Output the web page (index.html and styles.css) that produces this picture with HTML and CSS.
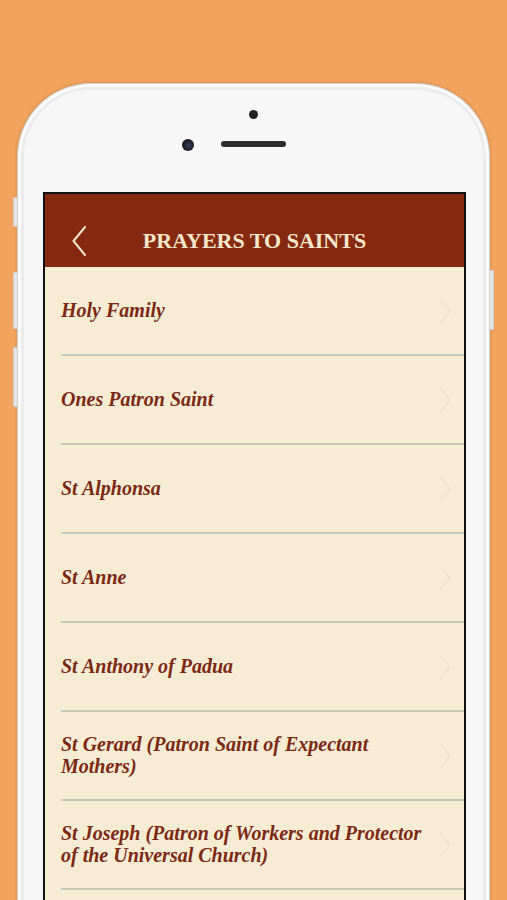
FILE: index.html
```html
<!DOCTYPE html>
<html lang="en">
<head>
<meta charset="utf-8">
<title>Prayers to Saints</title>
<link rel="stylesheet" href="styles.css">
</head>
<body>
<div class="phone">
  <span class="btn btn-l1"></span>
  <span class="btn btn-l2"></span>
  <span class="btn btn-l3"></span>
  <span class="btn btn-r1"></span>
  <div class="phone-top">
    <span class="sensor"></span>
    <div class="sensor-row">
      <span class="camera"></span>
      <span class="speaker"></span>
      <span class="spacer"></span>
    </div>
  </div>
  <div class="screen">
    <header class="navbar">
      <div class="back">
        <svg width="14" height="30" viewBox="0 0 14 30"><path d="M13 1 L1.5 15 L13 29" fill="none" stroke="#F5E6CC" stroke-width="2" stroke-linecap="round" stroke-linejoin="round"/></svg>
      </div>
      <h1 class="title">PRAYERS TO SAINTS</h1>
      <div></div>
    </header>
    <ul class="list">
      <li class="row"><div class="row-inner"><span class="label">Holy Family</span><svg class="chev" width="12" height="26" viewBox="0 0 12 26"><path d="M1 1 L11 13 L1 25" fill="none" stroke="#ECE2CB" stroke-width="1.5"/></svg></div></li>
      <li class="row"><div class="row-inner"><span class="label">Ones Patron Saint</span><svg class="chev" width="12" height="26" viewBox="0 0 12 26"><path d="M1 1 L11 13 L1 25" fill="none" stroke="#ECE2CB" stroke-width="1.5"/></svg></div></li>
      <li class="row"><div class="row-inner"><span class="label">St Alphonsa</span><svg class="chev" width="12" height="26" viewBox="0 0 12 26"><path d="M1 1 L11 13 L1 25" fill="none" stroke="#ECE2CB" stroke-width="1.5"/></svg></div></li>
      <li class="row"><div class="row-inner"><span class="label">St Anne</span><svg class="chev" width="12" height="26" viewBox="0 0 12 26"><path d="M1 1 L11 13 L1 25" fill="none" stroke="#ECE2CB" stroke-width="1.5"/></svg></div></li>
      <li class="row"><div class="row-inner"><span class="label">St Anthony of Padua</span><svg class="chev" width="12" height="26" viewBox="0 0 12 26"><path d="M1 1 L11 13 L1 25" fill="none" stroke="#ECE2CB" stroke-width="1.5"/></svg></div></li>
      <li class="row"><div class="row-inner"><span class="label">St Gerard (Patron Saint of Expectant Mothers)</span><svg class="chev" width="12" height="26" viewBox="0 0 12 26"><path d="M1 1 L11 13 L1 25" fill="none" stroke="#ECE2CB" stroke-width="1.5"/></svg></div></li>
      <li class="row"><div class="row-inner"><span class="label">St Joseph (Patron of Workers and Protector of the Universal Church)</span><svg class="chev" width="12" height="26" viewBox="0 0 12 26"><path d="M1 1 L11 13 L1 25" fill="none" stroke="#ECE2CB" stroke-width="1.5"/></svg></div></li>
    </ul>
  </div>
</div>
</body>
</html>
```

FILE: styles.css
```css
html, body {
  margin: 0;
  padding: 0;
}
body {
  background: #F2A35E;
  height: 900px;
  overflow: hidden;
  font-family: "Liberation Serif", "Times New Roman", serif;
}
.phone {
  position: relative;
  margin: 83px 0 0 17px;
  width: 471px;
  height: 900px;
  background: #F7F7F7;
  border: 1px solid #CFCFCF;
  border-bottom: none;
  border-radius: 74px 74px 0 0;
  box-shadow: inset 0 0 0 3px #FBFBFB, inset 0 0 0 6px #ECECEC, 0 0 3px rgba(120, 70, 20, 0.35);
}
.btn {
  position: absolute;
  width: 3px;
  background: #E4E4E4;
  border: 1px solid #CFCFCF;
}
.btn-l1 { left: -5px; top: 113px; height: 28px; border-right: none; border-radius: 2px 0 0 2px; }
.btn-l2 { left: -5px; top: 188px; height: 55px; border-right: none; border-radius: 2px 0 0 2px; }
.btn-l3 { left: -5px; top: 263px; height: 58px; border-right: none; border-radius: 2px 0 0 2px; }
.btn-r1 { right: -5px; top: 186px; height: 58px; border-left: none; border-radius: 0 2px 2px 0; }

.phone-top {
  height: 108px;
  display: flex;
  flex-direction: column;
  align-items: center;
  box-sizing: border-box;
  padding-top: 26px;
}
.sensor {
  width: 9px;
  height: 9px;
  border-radius: 50%;
  background: #222;
}
.sensor-row {
  margin-top: 18px;
  display: flex;
  align-items: center;
  gap: 27px;
}
.camera {
  width: 12px;
  height: 12px;
  border-radius: 50%;
  background: radial-gradient(circle at 55% 55%, #3a3f5a 0, #1c1c26 55%, #111 100%);
  margin-top: 2px;
}
.speaker {
  width: 65px;
  height: 6px;
  border-radius: 3px;
  background: #2c2c2c;
}
.spacer {
  width: 12px;
}

.screen {
  margin-left: 25px;
  width: 423px;
  height: 800px;
  box-sizing: border-box;
  background: #F6ECD4;
  border: 2px solid #111;
  border-bottom: none;
  overflow: hidden;
}
.navbar {
  height: 73px;
  box-sizing: border-box;
  padding-top: 20px;
  background: #852A10;
  display: grid;
  grid-template-columns: 1fr auto 1fr;
  align-items: center;
}
.back {
  padding-left: 27px;
  display: flex;
  align-items: center;
}
.title {
  margin: 0;
  font-size: 22px;
  font-weight: bold;
  color: #F5E6CC;
  letter-spacing: 0;
  padding-top: 1px;
}
.list {
  list-style: none;
  margin: 0;
  padding: 0;
}
.row {
  padding-left: 16px;
}
.row-inner {
  height: 87px;
  display: flex;
  align-items: center;
  border-bottom: 2px solid #C9C8B6;
  padding-right: 13px;
  gap: 8px;
}
.label {
  flex: 1;
  padding-right: 8px;
  font-size: 20px;
  line-height: 22px;
  font-weight: bold;
  font-style: italic;
  color: #7C2914;
  padding-bottom: 2px;
}
.chev {
  flex: none;
}
```
